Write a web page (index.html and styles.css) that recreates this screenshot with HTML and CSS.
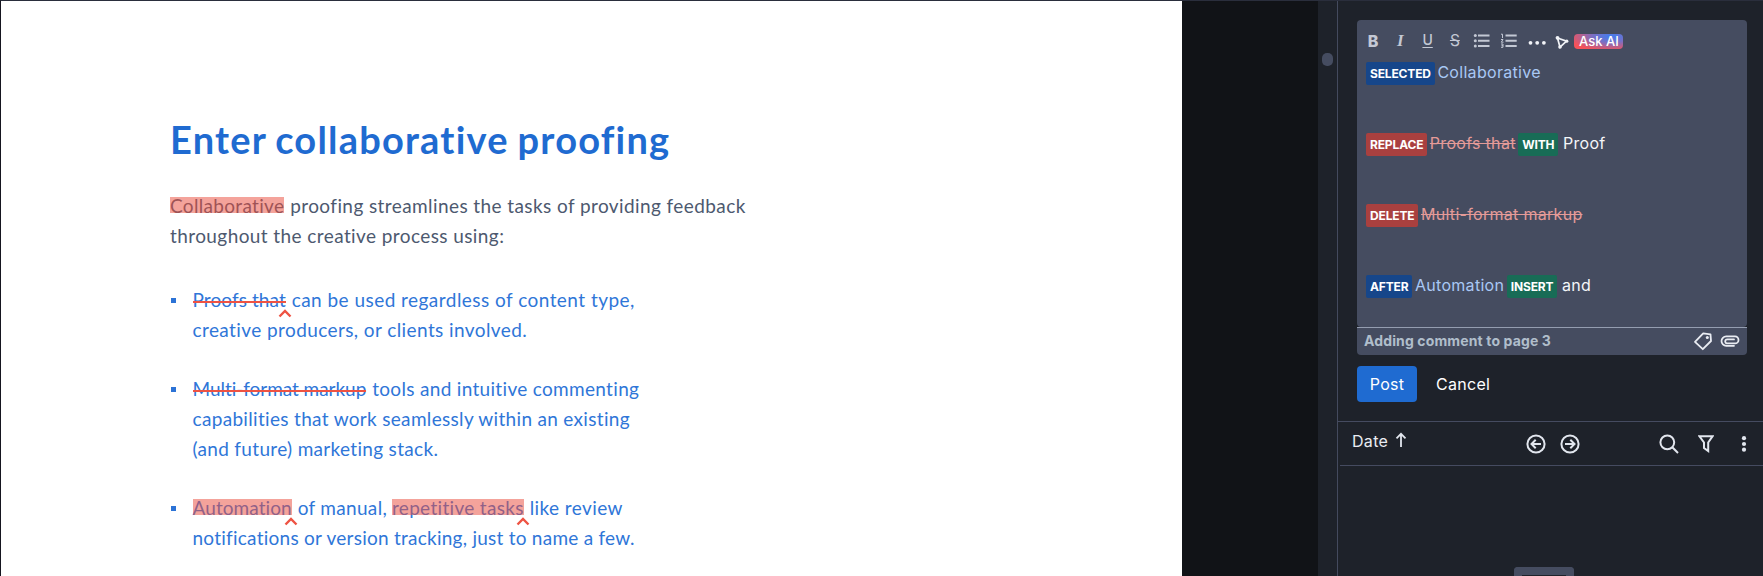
FILE: index.html
```html
<!DOCTYPE html>
<html lang="en">
<head>
  <meta charset="UTF-8" />
  <meta name="viewport" content="width=device-width, initial-scale=1.0" />
  <title>Proof Viewer</title>
  <link rel="stylesheet" href="styles.css">
</head>
<body>
  <div class="viewer">
    <!-- Proof page -->
    <main class="proof-page">
      <h1>Enter collaborative proofing</h1>
      <p class="intro">
        <span class="mark-highlight ls-2">Collaborative</span> <span class="ls-3">proofing streamlines the tasks of providing feedback</span><br>
        <span class="ls-3">throughout the creative process using:</span>
      </p>
      <ul class="proof-list">
        <li>
          <span class="mark-strike ls-0">Proofs that<svg class="caret" viewBox="0 0 14 9"><path d="M1.5 7.5 7 2l5.5 5.5"/></svg></span> <span class="ls-4">can be used regardless of content type,</span><br>
          <span class="ls-3">creative producers, or clients involved.</span>
        </li>
        <li>
          <span class="mark-strike ls-tight">Multi-format markup</span> <span class="ls-2">tools and intuitive commenting</span><br>
          <span class="ls-2">capabilities that work seamlessly within an existing</span><br>
          <span class="ls-2">(and future) marketing stack.</span>
        </li>
        <li>
          <span class="mark-highlight ls-0">Automation<svg class="caret" viewBox="0 0 14 9"><path d="M1.5 7.5 7 2l5.5 5.5"/></svg></span> <span class="ls-2">of manual,</span> <span class="mark-highlight ls-2">repetitive tasks<svg class="caret" viewBox="0 0 14 9"><path d="M1.5 7.5 7 2l5.5 5.5"/></svg></span> <span class="ls-3">like review</span><br>
          <span class="ls-1">notifications or version tracking, just to name a few.</span>
        </li>
      </ul>
    </main>

    <div class="gutter"><div class="scroll-thumb"></div></div>

    <!-- Comments sidebar -->
    <aside class="sidebar">
      <div class="composer">
        <div class="editor">
          <div class="toolbar">
            <span class="tool tool-bold">B</span>
            <span class="tool tool-italic">I</span>
            <span class="tool tool-underline">U</span>
            <span class="tool tool-strike">S</span>
            <svg class="tool" viewBox="0 0 20 20"><path fill="none" stroke="currentColor" stroke-width="2" d="M6 4.500H17.500M6 9.800H17.500M6 15H17.500"/><g fill="currentColor"><circle cx="3.300" cy="4.500" r="1.500"/><circle cx="3.300" cy="9.800" r="1.500"/><circle cx="3.300" cy="15" r="1.500"/></g></svg>
            <svg class="tool" viewBox="0 0 20 20"><path fill="none" stroke="currentColor" stroke-width="2" d="M6.500 4.500H17.700M6.500 9.800H17.700M6.500 15H17.700"/><path fill="none" stroke="currentColor" d="M2 3.200h1.500V7M2 8.500h2L2.300 11.200H4.500M2 13h2v3.300H2M2.500 14.700H4"/></svg>
            <svg class="tool bright" viewBox="0 0 20 20"><g fill="currentColor"><circle cx="3.500" cy="11.800" r="1.900"/><circle cx="10.200" cy="11.800" r="1.900"/><circle cx="16.900" cy="11.800" r="1.900"/></g></svg>
            <svg class="tool tool-pointer bright" viewBox="0 0 16 16"><path fill="none" stroke="currentColor" stroke-width="1.700" d="M3.500 4 12.500 7.200 6 13.200z"/><g fill="currentColor"><circle cx="3.500" cy="3.800" r="1.900"/><circle cx="12.800" cy="7.200" r="1.600"/><circle cx="6" cy="13" r="1.800"/></g></svg>
            <button class="ask-ai">Ask AI</button>
          </div>
          <div class="edits">
            <p><b class="tag tag-blue">SELECTED</b><span class="anchor">Collaborative</span></p>
            <p><b class="tag tag-red">REPLACE</b><span class="removed">Proofs that</span><b class="tag tag-green">WITH</b><span class="added">Proof</span></p>
            <p><b class="tag tag-red">DELETE</b><span class="removed">Multi-format markup</span></p>
            <p><b class="tag tag-blue">AFTER</b><span class="anchor">Automation</span><b class="tag tag-green">INSERT</b><span class="added">and</span></p>
          </div>
        </div>
        <div class="editor-footer">
          <span>Adding comment to page 3</span>
          <svg width="20" height="20" viewBox="0 0 20 20"><path fill="none" stroke="currentColor" stroke-width="1.800" stroke-linejoin="round" d="M2 10.800 10.200 2.300 17.500 3.400 18 10 9.800 18.200z"/><circle cx="14.300" cy="6.500" r="1.500" fill="currentColor"/></svg>
          <svg width="20" height="20" viewBox="0 0 20 20"><path fill="none" stroke="currentColor" stroke-width="1.800" stroke-linecap="round" d="M14 14.800H6.200a4.700 4.700 0 0 1 0-9.400h8.800a3.500 3.500 0 0 1 0 7H7.200a2 2 0 0 1 0-4H14"/></svg>
        </div>
        <div class="actions">
          <button class="btn-post">Post</button>
          <button class="btn-cancel">Cancel</button>
        </div>
      </div>

      <!-- Sort, paging and filter bar -->
      <div class="list-bar">
        <div class="sort">Date
          <svg width="12" height="16" viewBox="0 0 12 16"><path d="M6 15V2M1.500 6.300 6 1.800l4.500 4.500"/></svg>
        </div>
        <div class="nav">
          <svg width="20" height="20" viewBox="0 0 20 20"><circle cx="10" cy="10" r="8.600"/><path d="M15 10H5.800M9.700 5.800 5.500 10l4.200 4.200"/></svg>
          <svg width="20" height="20" viewBox="0 0 20 20"><circle cx="10" cy="10" r="8.600"/><path d="M5 10h9.200M10.300 5.800l4.200 4.200-4.200 4.200"/></svg>
        </div>
        <div class="filters">
          <svg width="20" height="20" viewBox="0 0 20 20"><circle cx="8.300" cy="8.300" r="6.900"/><path d="M13.300 13.300 19 19"/></svg>
          <svg width="16" height="20" viewBox="0 0 16 20"><path d="M1.500 2.300H14.500L10.200 8.500V17L6 14V8.500z"/></svg>
          <svg class="dots" width="6" height="20" viewBox="0 0 6 20"><circle cx="3" cy="4.200" r="2.100"/><circle cx="3" cy="10" r="2.100"/><circle cx="3" cy="15.700" r="2.100"/></svg>
        </div>
      </div>
      <div class="comment-list"><div class="drawer-handle"></div></div>
    </aside>
  </div>
</body>
</html>
```
FILE: styles.css
```css
/* Base Styles */
* {
  box-sizing: border-box;
}

body {
  margin: 0;
  background: #111317;
  font-family: Inter, sans-serif;
  font-size: 16px;
  color: #e9ecf2;
}

h1, p, ul {
  margin: 0;
  padding: 0;
}

button {
  border: none;
  padding: 0;
  font-family: inherit;
  cursor: pointer;
}

.viewer {
  display: flex;
  height: 576px;
  overflow: hidden;
  border-top: 1px solid #2a2e3c;
  border-left: 1px solid #15151f;
}

/* Proof page */
.proof-page {
  width: 1181px;
  padding: 115px 0 0 169px;
  background: #ffffff;
  font-family: Lato, sans-serif;
  font-size: 19px;
  line-height: 29.85px;
  color: #4d596f;
}

.proof-page h1 {
  font-size: 38px;
  line-height: 46px;
  letter-spacing: 1.2px;
  word-spacing: -1.5px;
  margin-bottom: 29.4px;
  color: #1f6bd1;
}

.intro {
  margin-bottom: 33.6px;
}

.proof-list {
  list-style: none;
  color: #2f76d8;
}

.proof-list li {
  position: relative;
  padding-left: 22.5px;
  margin-bottom: 29.7px;
}

.proof-list li::before {
  content: "";
  position: absolute;
  left: 1px;
  top: 13px;
  width: 5px;
  height: 5px;
  background: #2c73d6;
}

.ls-tight { letter-spacing: -0.04px; }
.ls-0 { letter-spacing: 0.08px; }
.ls-1 { letter-spacing: 0.25px; }
.ls-2 { letter-spacing: 0.32px; }
.ls-3 { letter-spacing: 0.41px; }
.ls-4 { letter-spacing: 0.46px; }

.mark-highlight,
.mark-strike {
  position: relative;
  margin-right: 1px;
}

.mark-highlight::after,
.mark-strike::after {
  content: "";
  position: absolute;
  left: 0;
  right: 0;
}

.mark-highlight::after {
  top: 3px;
  height: 16px;
  background: rgba(233, 78, 64, 0.52);
}

.mark-strike::after {
  top: 13px;
  height: 2px;
  background: #ee5343;
}

.caret {
  position: absolute;
  right: -6px;
  top: 21px;
  width: 14px;
  height: 9px;
  fill: none;
  stroke: #ee5343;
  stroke-width: 2.4;
}

/* Scroll gutter */
.gutter {
  width: 20px;
  margin-left: 136px;
  padding: 52px 4px 0;
  background: #1e222a;
  border-right: 1px solid #444a5e;
}

.scroll-thumb {
  width: 11px;
  height: 13px;
  border-radius: 5px;
  background: #454c60;
}

/* Sidebar */
.sidebar {
  flex: 1;
  display: flex;
  flex-direction: column;
  background: #1e222a;
}

.composer {
  height: 421px;
  padding: 19px 16px 0 19px;
  border-bottom: 1px solid #454b60;
}

.editor {
  height: 307px;
  padding: 11px 9px 0;
  border-radius: 4px;
  background: #454c60;
}

.toolbar {
  display: flex;
  align-items: center;
  height: 20px;
  margin-left: -3px;
  gap: 7.3px;
  color: #c3c8d4;
}

.tool {
  width: 20px;
  height: 20px;
  flex: none;
  font-size: 15.5px;
  line-height: 20px;
  text-align: center;
}

.tool-bold {
  font-size: 16px;
  font-weight: 800;
}

.tool-italic {
  font: italic bold 17px/20px "Liberation Serif", serif;
}

.tool-underline {
  font-size: 14px;
  font-weight: 500;
  line-height: 18px;
  text-decoration: underline;
  text-underline-offset: 2px;
}

.tool-strike {
  text-decoration: line-through;
}

.tool-pointer {
  width: 16px;
  height: 16px;
  margin: 2px 0 0;
}

.bright {
  color: #f1f3f7;
}

.ask-ai {
  width: 49px;
  height: 15px;
  margin-left: -3px;
  border-radius: 4px;
  background: radial-gradient(ellipse at 75% 15%, #3f7df0 0%, #7a6fc4 35%, #f4525a 80%);
  font-size: 13px;
  font-weight: 500;
  line-height: 15px;
  color: #ffffff;
}

.edits {
  padding-top: 9px;
  line-height: 24px;
  letter-spacing: 0.3px;
}

.edits p {
  height: 71px;
}

.tag {
  margin: 0 2.5px;
  padding: 4px;
  border-radius: 2px;
  font-size: 12px;
  letter-spacing: -0.15px;
  color: #ffffff;
}

.tag:first-child {
  margin-left: 0;
}

.tag-blue { background: #16468a; }
.tag-red { background: #a9403f; }
.tag-green { background: #186c56; }

.anchor { color: #a9c8f5; }

.removed {
  color: #e49a98;
  text-decoration: line-through;
}

.added {
  margin-left: 2px;
  color: #f4f6f9;
}

.editor-footer {
  display: flex;
  align-items: center;
  height: 28px;
  padding: 0 7px 1px;
  gap: 7px;
  border-top: 1px solid #949db0;
  border-radius: 0 0 4px 4px;
  background: #454c60;
}

.editor-footer span {
  flex: 1;
  padding-bottom: 2px;
  font-size: 14px;
  font-weight: 700;
  letter-spacing: 0.13px;
  color: #b0becb;
}

.actions {
  display: flex;
  margin-top: 11px;
}

.actions button {
  height: 36px;
  font-size: 16px;
  letter-spacing: 0.28px;
  color: #ffffff;
}

.btn-post {
  width: 60px;
  border-radius: 4px;
  background: #1f6bd1;
}

.actions .btn-cancel {
  margin-left: 19px;
  background: none;
}

/* Sort, paging and filter bar */
.list-bar {
  display: flex;
  justify-content: space-between;
  align-items: center;
  height: 44px;
  margin-left: 2px;
  padding: 0 16px 0 12px;
  border-bottom: 1px solid #454b60;
}

.list-bar svg {
  fill: none;
  stroke: #e2e6ee;
  stroke-width: 2;
}

.list-bar .dots {
  margin-left: 8px;
  fill: #e2e6ee;
  stroke: none;
}

.sort {
  width: 174px;
  letter-spacing: 0.3px;
  padding-bottom: 5px;
}

.sort svg {
  margin-left: 2px;
  vertical-align: -1px;
}

.list-bar .sort svg {
  stroke-width: 1.8;
}

.nav {
  display: flex;
  flex: 1;
  gap: 14px;
}

.filters {
  display: flex;
  gap: 19px;
}

.comment-list {
  flex: 1;
  display: flex;
  align-items: flex-end;
  padding-left: 176px;
}

.drawer-handle {
  width: 60px;
  height: 9px;
  border: 8px solid #454c60;
  border-bottom: none;
  border-radius: 4px 4px 0 0;
  background: #1e222a;
}
```
